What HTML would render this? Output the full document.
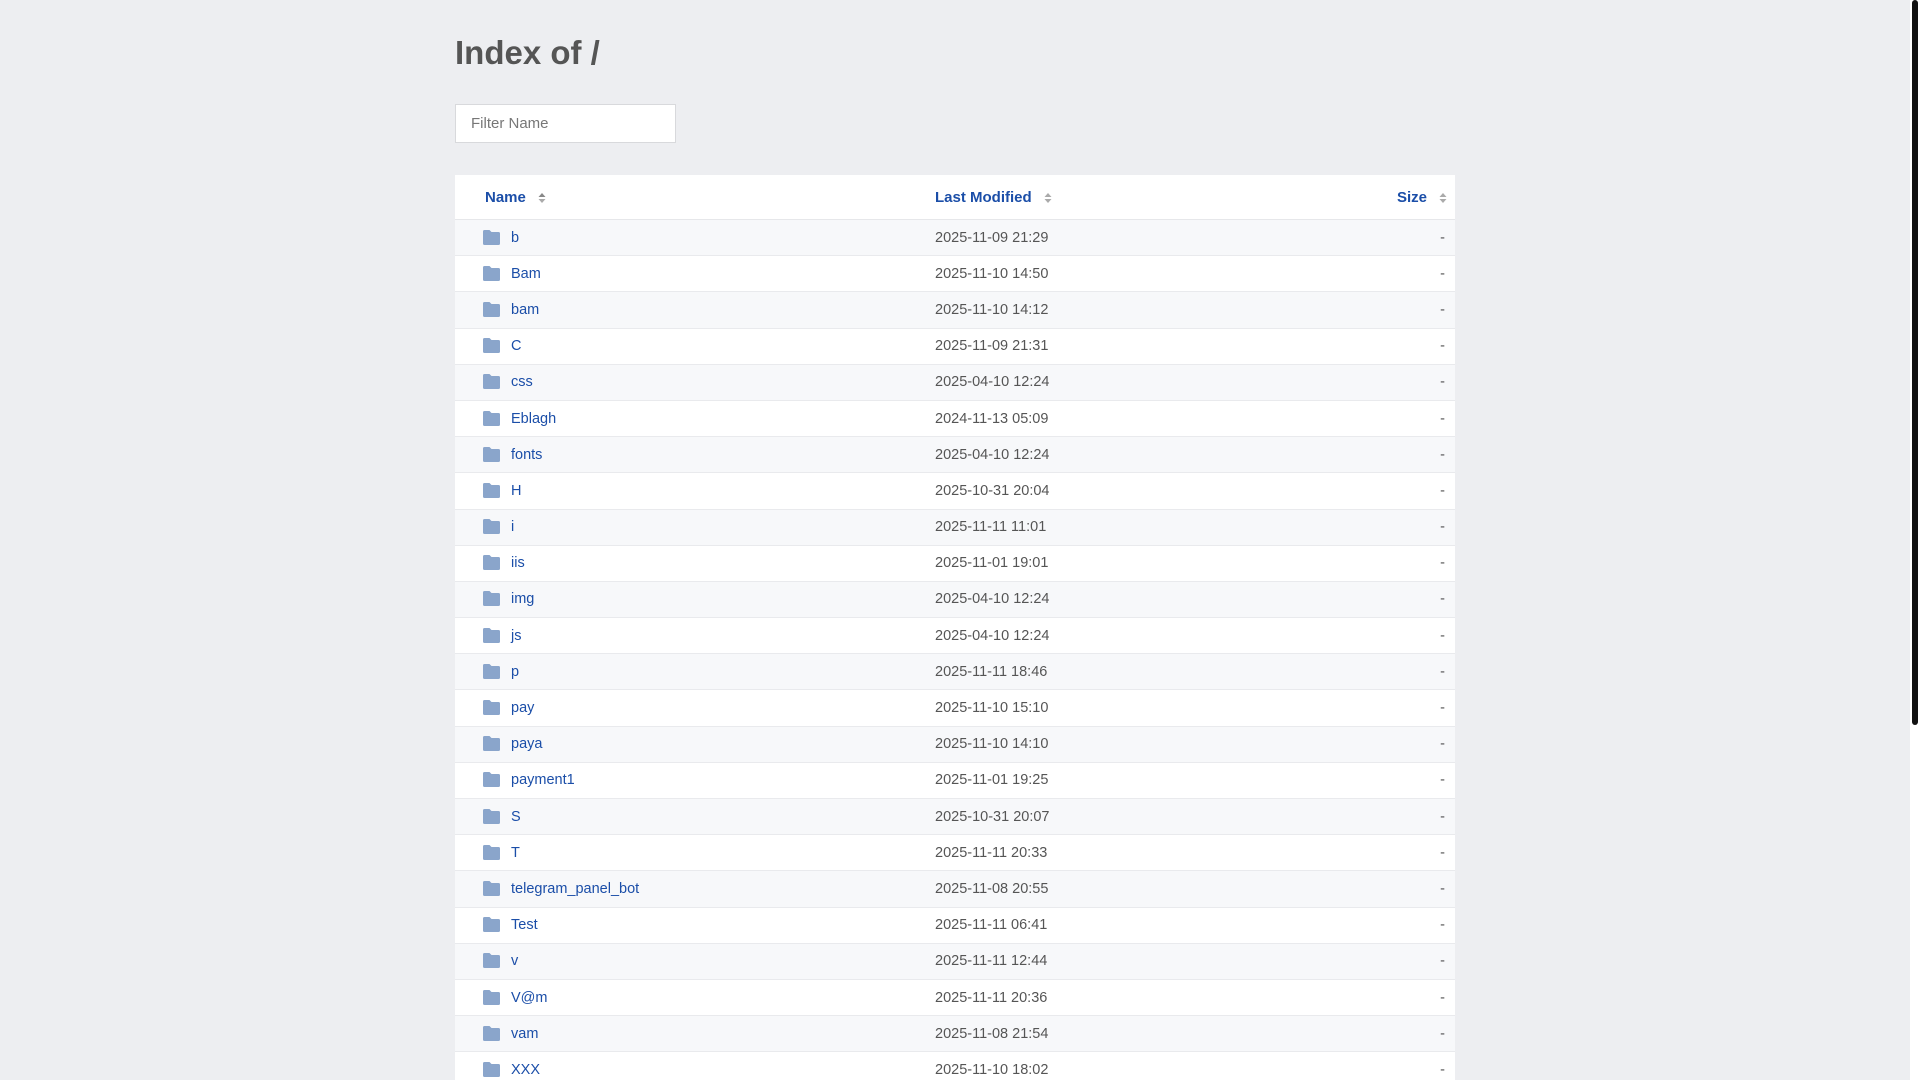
<!DOCTYPE html>
<html><head><meta charset="utf-8"><style>
html,body{margin:0;padding:0;overflow:hidden;}
body{width:1920px;height:1080px;background:#edeef1;font-family:"Liberation Sans",sans-serif;position:relative;}
h1{position:absolute;left:455px;top:31px;margin:0;font-size:33px;font-weight:bold;color:#555;line-height:44px;}
.filter{position:absolute;left:455px;top:104px;width:219px;height:37px;background:#fff;border:1px solid #d8d9dc;}
.filter span{position:absolute;left:15px;top:10px;font-size:15px;color:#777;}
table{position:absolute;left:455px;top:175px;width:1000px;border-collapse:collapse;background:#fff;font-size:14.5px;table-layout:fixed;}
th{height:44px;text-align:left;font-weight:bold;color:#1b4ea8;font-size:15px;padding:0;border-bottom:1px solid #e6e7ea;}
td{height:35.2px;padding:0;border-bottom:1px solid #e9eaed;color:#555;}
tbody tr:nth-child(odd){background:#f7f8fa;}
.n{padding-left:28px;}
.n a{color:#1b4ea8;text-decoration:none;}
.ic{display:inline-block;vertical-align:-3px;width:17px;height:15px;margin-right:11px;}
.s{text-align:right;padding-right:10px;}
.arr{display:inline-block;vertical-align:middle;margin-left:12px;}
.sb{position:fixed;right:0;top:0;width:10px;height:1080px;background:#fff;z-index:10;}
.th{position:absolute;left:2px;top:0;width:6px;height:725px;background:#111;border-radius:3px;}
</style></head><body>
<h1>Index of /</h1>
<div class="filter"><span>Filter Name</span></div>
<table>
<colgroup><col style="width:480px"><col style="width:400px"><col style="width:120px"></colgroup>
<thead><tr>
<th class="n" style="padding-left:30px">Name<svg class="arr" width="8" height="12" viewBox="0 0 8 12"><path d="M4 1L7.5 5H.5z" fill="#888"/><path d="M4 11L7.5 7H.5z" fill="#aaa"/></svg></th>
<th>Last Modified<svg class="arr" width="8" height="12" viewBox="0 0 8 12"><path d="M4 1L7.5 5H.5z" fill="#aaa"/><path d="M4 11L7.5 7H.5z" fill="#aaa"/></svg></th>
<th class="s" style="padding-right:8px">Size<svg class="arr" width="8" height="12" viewBox="0 0 8 12"><path d="M4 1L7.5 5H.5z" fill="#aaa"/><path d="M4 11L7.5 7H.5z" fill="#aaa"/></svg></th>
</tr></thead>
<tbody>
<tr><td class="n"><svg class="ic" viewBox="0 0 17 15"><path d="M1.5 0h5l2 2h7a1.5 1.5 0 0 1 1.5 1.5v10A1.5 1.5 0 0 1 15.5 15h-14A1.5 1.5 0 0 1 0 13.5v-12A1.5 1.5 0 0 1 1.5 0z" fill="#8aa5cb"/></svg><a>b</a></td><td>2025-11-09 21:29</td><td class="s">-</td></tr>
<tr><td class="n"><svg class="ic" viewBox="0 0 17 15"><path d="M1.5 0h5l2 2h7a1.5 1.5 0 0 1 1.5 1.5v10A1.5 1.5 0 0 1 15.5 15h-14A1.5 1.5 0 0 1 0 13.5v-12A1.5 1.5 0 0 1 1.5 0z" fill="#8aa5cb"/></svg><a>Bam</a></td><td>2025-11-10 14:50</td><td class="s">-</td></tr>
<tr><td class="n"><svg class="ic" viewBox="0 0 17 15"><path d="M1.5 0h5l2 2h7a1.5 1.5 0 0 1 1.5 1.5v10A1.5 1.5 0 0 1 15.5 15h-14A1.5 1.5 0 0 1 0 13.5v-12A1.5 1.5 0 0 1 1.5 0z" fill="#8aa5cb"/></svg><a>bam</a></td><td>2025-11-10 14:12</td><td class="s">-</td></tr>
<tr><td class="n"><svg class="ic" viewBox="0 0 17 15"><path d="M1.5 0h5l2 2h7a1.5 1.5 0 0 1 1.5 1.5v10A1.5 1.5 0 0 1 15.5 15h-14A1.5 1.5 0 0 1 0 13.5v-12A1.5 1.5 0 0 1 1.5 0z" fill="#8aa5cb"/></svg><a>C</a></td><td>2025-11-09 21:31</td><td class="s">-</td></tr>
<tr><td class="n"><svg class="ic" viewBox="0 0 17 15"><path d="M1.5 0h5l2 2h7a1.5 1.5 0 0 1 1.5 1.5v10A1.5 1.5 0 0 1 15.5 15h-14A1.5 1.5 0 0 1 0 13.5v-12A1.5 1.5 0 0 1 1.5 0z" fill="#8aa5cb"/></svg><a>css</a></td><td>2025-04-10 12:24</td><td class="s">-</td></tr>
<tr><td class="n"><svg class="ic" viewBox="0 0 17 15"><path d="M1.5 0h5l2 2h7a1.5 1.5 0 0 1 1.5 1.5v10A1.5 1.5 0 0 1 15.5 15h-14A1.5 1.5 0 0 1 0 13.5v-12A1.5 1.5 0 0 1 1.5 0z" fill="#8aa5cb"/></svg><a>Eblagh</a></td><td>2024-11-13 05:09</td><td class="s">-</td></tr>
<tr><td class="n"><svg class="ic" viewBox="0 0 17 15"><path d="M1.5 0h5l2 2h7a1.5 1.5 0 0 1 1.5 1.5v10A1.5 1.5 0 0 1 15.5 15h-14A1.5 1.5 0 0 1 0 13.5v-12A1.5 1.5 0 0 1 1.5 0z" fill="#8aa5cb"/></svg><a>fonts</a></td><td>2025-04-10 12:24</td><td class="s">-</td></tr>
<tr><td class="n"><svg class="ic" viewBox="0 0 17 15"><path d="M1.5 0h5l2 2h7a1.5 1.5 0 0 1 1.5 1.5v10A1.5 1.5 0 0 1 15.5 15h-14A1.5 1.5 0 0 1 0 13.5v-12A1.5 1.5 0 0 1 1.5 0z" fill="#8aa5cb"/></svg><a>H</a></td><td>2025-10-31 20:04</td><td class="s">-</td></tr>
<tr><td class="n"><svg class="ic" viewBox="0 0 17 15"><path d="M1.5 0h5l2 2h7a1.5 1.5 0 0 1 1.5 1.5v10A1.5 1.5 0 0 1 15.5 15h-14A1.5 1.5 0 0 1 0 13.5v-12A1.5 1.5 0 0 1 1.5 0z" fill="#8aa5cb"/></svg><a>i</a></td><td>2025-11-11 11:01</td><td class="s">-</td></tr>
<tr><td class="n"><svg class="ic" viewBox="0 0 17 15"><path d="M1.5 0h5l2 2h7a1.5 1.5 0 0 1 1.5 1.5v10A1.5 1.5 0 0 1 15.5 15h-14A1.5 1.5 0 0 1 0 13.5v-12A1.5 1.5 0 0 1 1.5 0z" fill="#8aa5cb"/></svg><a>iis</a></td><td>2025-11-01 19:01</td><td class="s">-</td></tr>
<tr><td class="n"><svg class="ic" viewBox="0 0 17 15"><path d="M1.5 0h5l2 2h7a1.5 1.5 0 0 1 1.5 1.5v10A1.5 1.5 0 0 1 15.5 15h-14A1.5 1.5 0 0 1 0 13.5v-12A1.5 1.5 0 0 1 1.5 0z" fill="#8aa5cb"/></svg><a>img</a></td><td>2025-04-10 12:24</td><td class="s">-</td></tr>
<tr><td class="n"><svg class="ic" viewBox="0 0 17 15"><path d="M1.5 0h5l2 2h7a1.5 1.5 0 0 1 1.5 1.5v10A1.5 1.5 0 0 1 15.5 15h-14A1.5 1.5 0 0 1 0 13.5v-12A1.5 1.5 0 0 1 1.5 0z" fill="#8aa5cb"/></svg><a>js</a></td><td>2025-04-10 12:24</td><td class="s">-</td></tr>
<tr><td class="n"><svg class="ic" viewBox="0 0 17 15"><path d="M1.5 0h5l2 2h7a1.5 1.5 0 0 1 1.5 1.5v10A1.5 1.5 0 0 1 15.5 15h-14A1.5 1.5 0 0 1 0 13.5v-12A1.5 1.5 0 0 1 1.5 0z" fill="#8aa5cb"/></svg><a>p</a></td><td>2025-11-11 18:46</td><td class="s">-</td></tr>
<tr><td class="n"><svg class="ic" viewBox="0 0 17 15"><path d="M1.5 0h5l2 2h7a1.5 1.5 0 0 1 1.5 1.5v10A1.5 1.5 0 0 1 15.5 15h-14A1.5 1.5 0 0 1 0 13.5v-12A1.5 1.5 0 0 1 1.5 0z" fill="#8aa5cb"/></svg><a>pay</a></td><td>2025-11-10 15:10</td><td class="s">-</td></tr>
<tr><td class="n"><svg class="ic" viewBox="0 0 17 15"><path d="M1.5 0h5l2 2h7a1.5 1.5 0 0 1 1.5 1.5v10A1.5 1.5 0 0 1 15.5 15h-14A1.5 1.5 0 0 1 0 13.5v-12A1.5 1.5 0 0 1 1.5 0z" fill="#8aa5cb"/></svg><a>paya</a></td><td>2025-11-10 14:10</td><td class="s">-</td></tr>
<tr><td class="n"><svg class="ic" viewBox="0 0 17 15"><path d="M1.5 0h5l2 2h7a1.5 1.5 0 0 1 1.5 1.5v10A1.5 1.5 0 0 1 15.5 15h-14A1.5 1.5 0 0 1 0 13.5v-12A1.5 1.5 0 0 1 1.5 0z" fill="#8aa5cb"/></svg><a>payment1</a></td><td>2025-11-01 19:25</td><td class="s">-</td></tr>
<tr><td class="n"><svg class="ic" viewBox="0 0 17 15"><path d="M1.5 0h5l2 2h7a1.5 1.5 0 0 1 1.5 1.5v10A1.5 1.5 0 0 1 15.5 15h-14A1.5 1.5 0 0 1 0 13.5v-12A1.5 1.5 0 0 1 1.5 0z" fill="#8aa5cb"/></svg><a>S</a></td><td>2025-10-31 20:07</td><td class="s">-</td></tr>
<tr><td class="n"><svg class="ic" viewBox="0 0 17 15"><path d="M1.5 0h5l2 2h7a1.5 1.5 0 0 1 1.5 1.5v10A1.5 1.5 0 0 1 15.5 15h-14A1.5 1.5 0 0 1 0 13.5v-12A1.5 1.5 0 0 1 1.5 0z" fill="#8aa5cb"/></svg><a>T</a></td><td>2025-11-11 20:33</td><td class="s">-</td></tr>
<tr><td class="n"><svg class="ic" viewBox="0 0 17 15"><path d="M1.5 0h5l2 2h7a1.5 1.5 0 0 1 1.5 1.5v10A1.5 1.5 0 0 1 15.5 15h-14A1.5 1.5 0 0 1 0 13.5v-12A1.5 1.5 0 0 1 1.5 0z" fill="#8aa5cb"/></svg><a>telegram_panel_bot</a></td><td>2025-11-08 20:55</td><td class="s">-</td></tr>
<tr><td class="n"><svg class="ic" viewBox="0 0 17 15"><path d="M1.5 0h5l2 2h7a1.5 1.5 0 0 1 1.5 1.5v10A1.5 1.5 0 0 1 15.5 15h-14A1.5 1.5 0 0 1 0 13.5v-12A1.5 1.5 0 0 1 1.5 0z" fill="#8aa5cb"/></svg><a>Test</a></td><td>2025-11-11 06:41</td><td class="s">-</td></tr>
<tr><td class="n"><svg class="ic" viewBox="0 0 17 15"><path d="M1.5 0h5l2 2h7a1.5 1.5 0 0 1 1.5 1.5v10A1.5 1.5 0 0 1 15.5 15h-14A1.5 1.5 0 0 1 0 13.5v-12A1.5 1.5 0 0 1 1.5 0z" fill="#8aa5cb"/></svg><a>v</a></td><td>2025-11-11 12:44</td><td class="s">-</td></tr>
<tr><td class="n"><svg class="ic" viewBox="0 0 17 15"><path d="M1.5 0h5l2 2h7a1.5 1.5 0 0 1 1.5 1.5v10A1.5 1.5 0 0 1 15.5 15h-14A1.5 1.5 0 0 1 0 13.5v-12A1.5 1.5 0 0 1 1.5 0z" fill="#8aa5cb"/></svg><a>V@m</a></td><td>2025-11-11 20:36</td><td class="s">-</td></tr>
<tr><td class="n"><svg class="ic" viewBox="0 0 17 15"><path d="M1.5 0h5l2 2h7a1.5 1.5 0 0 1 1.5 1.5v10A1.5 1.5 0 0 1 15.5 15h-14A1.5 1.5 0 0 1 0 13.5v-12A1.5 1.5 0 0 1 1.5 0z" fill="#8aa5cb"/></svg><a>vam</a></td><td>2025-11-08 21:54</td><td class="s">-</td></tr>
<tr><td class="n"><svg class="ic" viewBox="0 0 17 15"><path d="M1.5 0h5l2 2h7a1.5 1.5 0 0 1 1.5 1.5v10A1.5 1.5 0 0 1 15.5 15h-14A1.5 1.5 0 0 1 0 13.5v-12A1.5 1.5 0 0 1 1.5 0z" fill="#8aa5cb"/></svg><a>XXX</a></td><td>2025-11-10 18:02</td><td class="s">-</td></tr>
</tbody></table>
<div class="sb"><div class="th"></div></div>
</body></html>
